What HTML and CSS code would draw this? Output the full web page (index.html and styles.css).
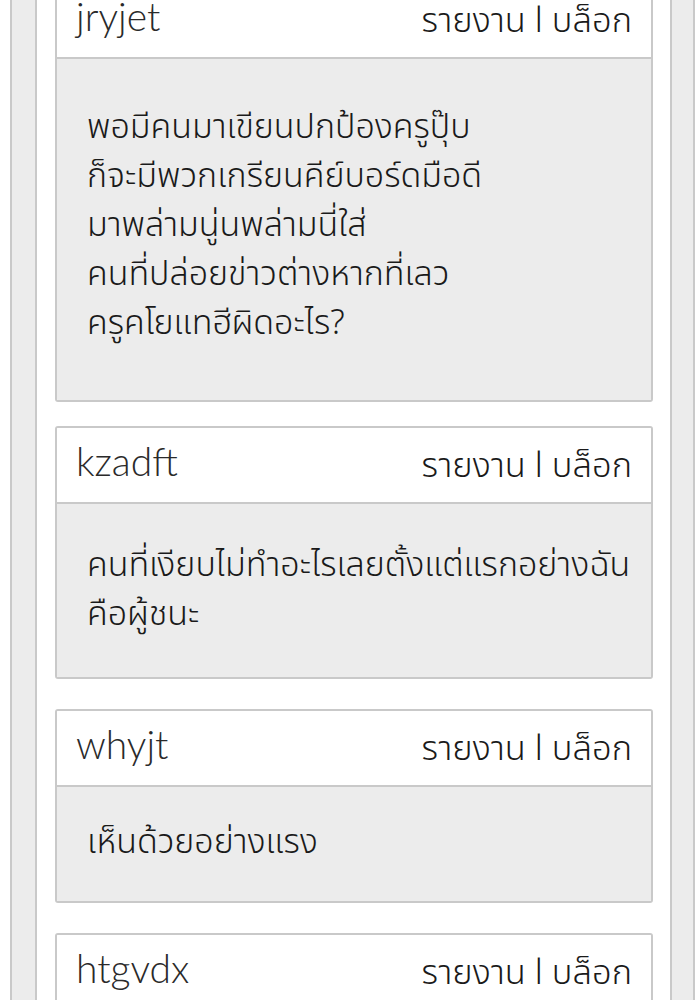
FILE: index.html
```html
<!DOCTYPE html>
<html lang="th">
<head>
    <meta charset="UTF-8">
    <title>ความคิดเห็น</title>
    <link rel="stylesheet" href="styles.css">
</head>
<body>
    <div class="frame">
        <div class="inner">
            <div class="comment-list">

                <div class="comment first">
                    <div class="comment-head">
                        <span class="comment-user">jryjet</span>
                        <span class="comment-actions">รายงาน l บล็อก</span>
                    </div>
                    <div class="comment-body long">
                        พอมีคนมาเขียนปกป้องครูปุ๊บ<br>
                        ก็จะมีพวกเกรียนคีย์บอร์ดมือดี<br>
                        มาพล่ามนู่นพล่ามนี่ใส่<br>
                        คนที่ปล่อยข่าวต่างหากที่เลว<br>
                        ครูคโยแทฮีผิดอะไร?
                    </div>
                </div>

                <div class="comment">
                    <div class="comment-head">
                        <span class="comment-user">kzadft</span>
                        <span class="comment-actions">รายงาน l บล็อก</span>
                    </div>
                    <div class="comment-body mid">
                        คนที่เงียบไม่ทำอะไรเลยตั้งแต่แรกอย่างฉัน<br>
                        คือผู้ชนะ
                    </div>
                </div>

                <div class="comment">
                    <div class="comment-head">
                        <span class="comment-user">whyjt</span>
                        <span class="comment-actions">รายงาน l บล็อก</span>
                    </div>
                    <div class="comment-body">
                        เห็นด้วยอย่างแรง
                    </div>
                </div>

                <div class="comment">
                    <div class="comment-head">
                        <span class="comment-user">htgvdx</span>
                        <span class="comment-actions">รายงาน l บล็อก</span>
                    </div>
                    <div class="comment-body">
                        555
                    </div>
                </div>

            </div>
        </div>
    </div>
</body>
</html>
```

FILE: styles.css
```css
html, body {
    margin: 0;
    padding: 0;
    height: 1000px;
    overflow: hidden;
    background-color: #fff;
}
body {
    font-family: "Noto Sans Thai", "Noto Sans Thai UI", "Noto Sans", sans-serif;
    color: #1a1a1a;
}
.frame {
    margin: 0 5px 0 10px;
    border-left: 2px solid #c9c9c9;
    border-right: 2px solid #c9c9c9;
    background-color: #ececec;
    padding: 0 21px 0 23px;
    min-height: 1000px;
}
.inner {
    border-left: 2px solid #c9c9c9;
    border-right: 2px solid #c9c9c9;
    background-color: #fff;
    padding: 0 17px 0 18px;
    min-height: 1000px;
}
.comment-list {
    margin-top: -19px;
}
.comment {
    border: 2px solid #c9c9c9;
    border-radius: 3px;
    overflow: hidden;
    margin-bottom: 30px;
}
.comment.first {
    margin-bottom: 24px;
}
.comment-head {
    height: 74px;
    display: flex;
    justify-content: space-between;
    align-items: center;
    padding: 0 19px;
    background-color: #fff;
    border-bottom: 2px solid #c9c9c9;
}
.comment-user {
    font-family: Lato, sans-serif;
    font-weight: 300;
    font-size: 39px;
    color: #2a2a2a;
    margin-top: -8px;
}
.comment-actions {
    font-size: 34.5px;
    font-weight: 300;
    margin-top: 2px;
}
.comment-body {
    background-color: #ececec;
    padding: 31px 12px 34px 30px;
    font-size: 34px;
    font-weight: 300;
    line-height: 49px;
}
.comment-body.mid {
    padding-top: 37px;
    padding-bottom: 38px;
}
.comment-body.long {
    padding-top: 44px;
    padding-bottom: 52px;
}
```
